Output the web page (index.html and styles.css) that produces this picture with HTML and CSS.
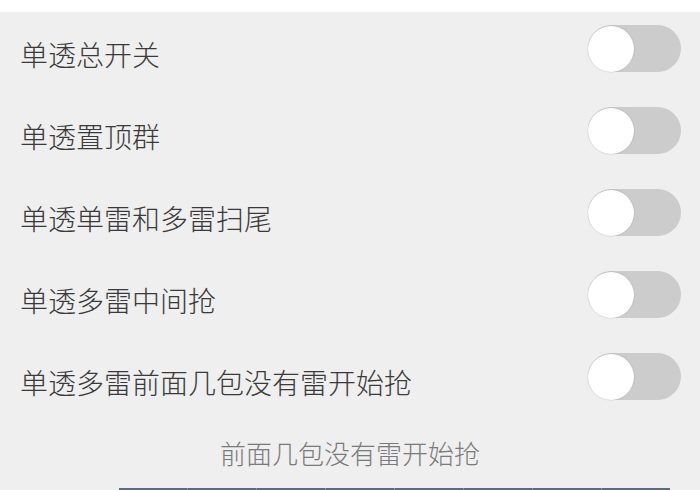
FILE: index.html
```html
<!DOCTYPE html>
<html lang="zh-CN">
<head>
<meta charset="utf-8">
<title>单透设置</title>
<link rel="stylesheet" href="styles.css">
</head>
<body>
<div class="topbar"></div>
<div class="list">
  <div class="row"><span class="label">单透总开关</span><span class="switch"><span class="thumb"></span></span></div>
  <div class="row"><span class="label">单透置顶群</span><span class="switch"><span class="thumb"></span></span></div>
  <div class="row"><span class="label">单透单雷和多雷扫尾</span><span class="switch"><span class="thumb"></span></span></div>
  <div class="row"><span class="label">单透多雷中间抢</span><span class="switch"><span class="thumb"></span></span></div>
  <div class="row"><span class="label">单透多雷前面几包没有雷开始抢</span><span class="switch"><span class="thumb"></span></span></div>
</div>
<div class="subtitle">前面几包没有雷开始抢</div>
<div class="picker">
  <span class="cell"></span><span class="cell"></span><span class="cell"></span><span class="cell"></span>
  <span class="cell"></span><span class="cell"></span><span class="cell"></span><span class="cell"></span>
</div>
</body>
</html>
```

FILE: styles.css
```css
html, body {
  margin: 0;
  padding: 0;
}
body {
  width: 700px;
  height: 490px;
  overflow: hidden;
  background: #efefef;
  font-family: "Noto Sans CJK SC", "Noto Sans", sans-serif;
}
.topbar {
  height: 12px;
  background: #ffffff;
}
.list {
  display: flex;
  flex-direction: column;
}
.row {
  height: 82px;
  display: flex;
  align-items: center;
  justify-content: space-between;
  padding: 0 19px 0 20px;
}
.label {
  font-size: 28px;
  font-weight: 300;
  line-height: 1;
  color: #3a3a3a;
  padding-top: 2px;
}
.switch {
  width: 93px;
  height: 47px;
  border-radius: 24px;
  background: #cccccc;
  display: flex;
  align-items: center;
  margin-bottom: 9px;
}
.thumb {
  width: 46px;
  height: 46px;
  border-radius: 50%;
  background: #ffffff;
  box-shadow: 0 0 1px 0.5px rgba(0, 0, 0, 0.12);
}
.subtitle {
  height: 61px;
  padding-bottom: 5px;
  display: flex;
  align-items: center;
  justify-content: center;
  font-size: 26px;
  font-weight: 300;
  line-height: 1;
  color: #7a7a7a;
}
.picker {
  margin-left: 119px;
  width: 551px;
  height: 10px;
  display: flex;
  background: #5f6985;
}
.cell {
  flex: 1;
  border-left: 1px solid #7d8fb8;
}
.cell:first-child {
  border-left: none;
}
```
